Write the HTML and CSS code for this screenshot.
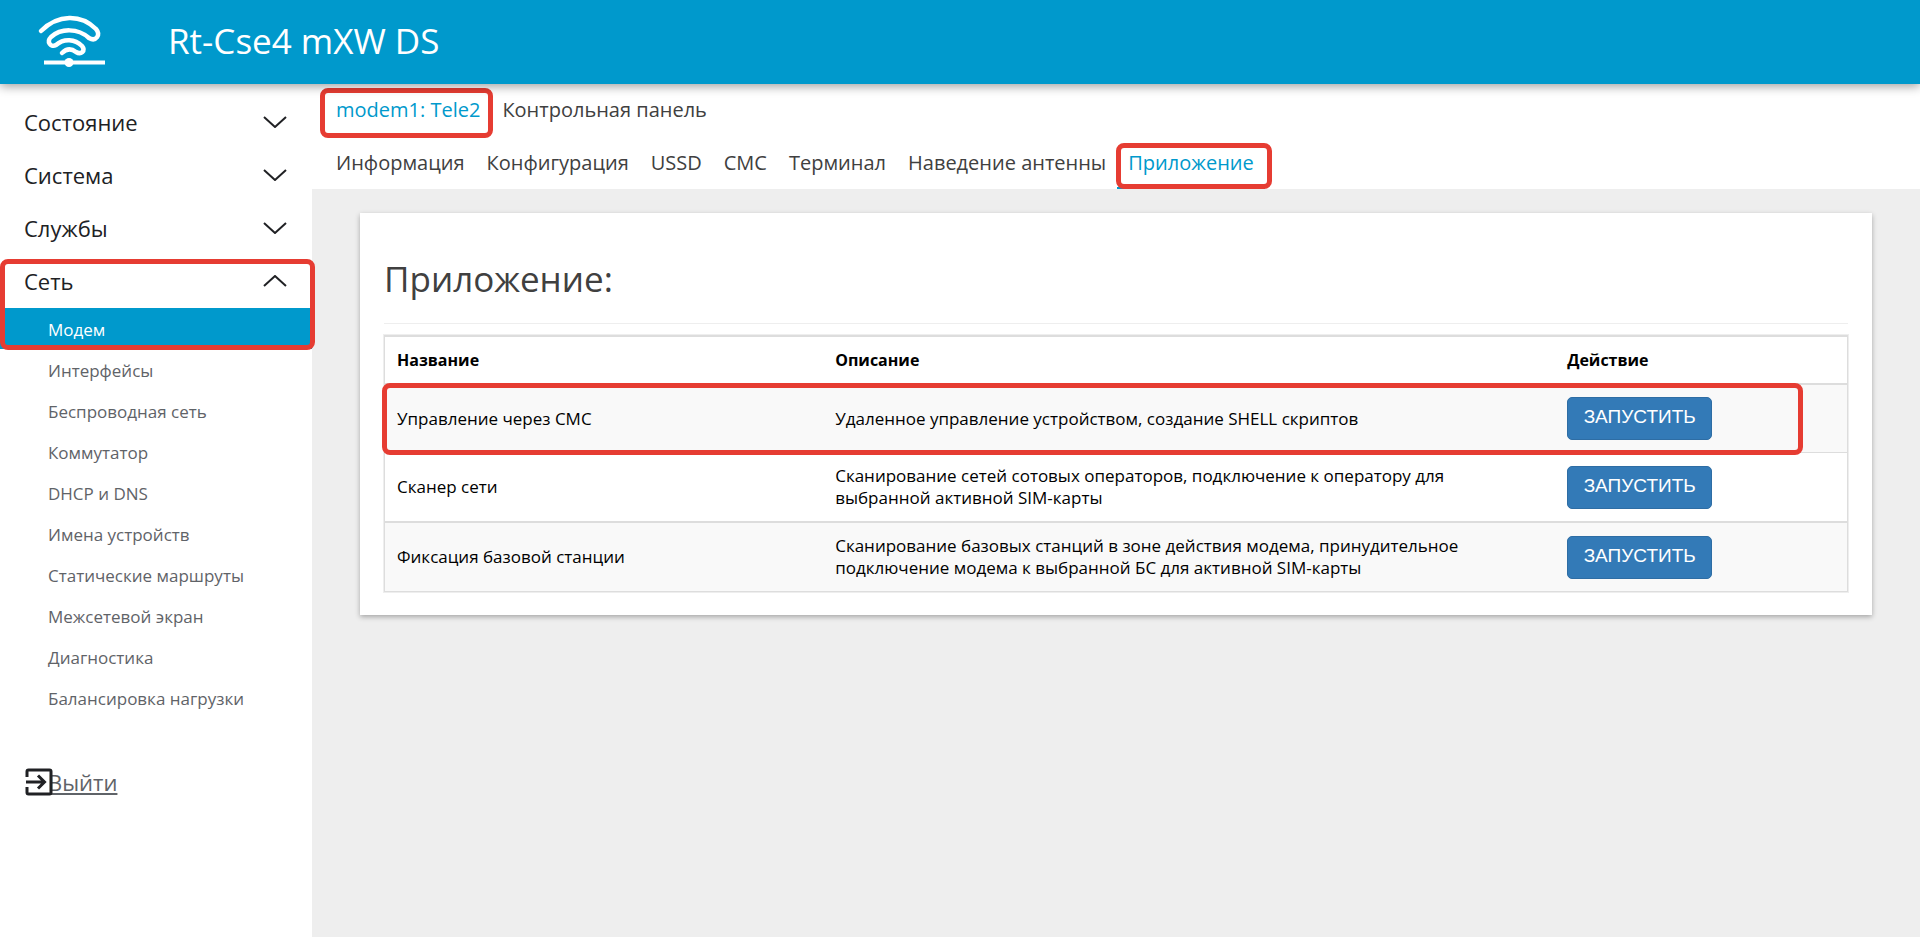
FILE: index.html
```html
<!DOCTYPE html>
<html lang="ru">
<head>
<meta charset="utf-8">
<title>Rt-Cse4 mXW DS</title>
<link rel="stylesheet" href="styles.css">
</head>
<body>
<header class="header">
  <svg class="logo" viewBox="0 0 76 62" fill="none" stroke="#fff" stroke-width="4.500" stroke-linecap="round" stroke-linejoin="round" aria-hidden="true">
    <path d="M7 21C24 4 47 4 62 19C67 25 62 32 55 28C44 18 27 18 17 27C12 32 17 38 22 35C30 28 41 29 48 36C52 41 47 45 42 42C37 38 32 39 28 43"/>
    <path d="M10 52.500H71" stroke-width="4" stroke-linecap="butt"/>
    <circle cx="35" cy="52.500" r="4.500" fill="#fff" stroke="none"/>
  </svg>
  <span class="brand">Rt-Cse4 mXW DS</span>
</header>
<div class="layout">
  <nav class="sidebar">
    <button type="button" class="section">Состояние<svg class="chevron" viewBox="0 0 24 12"><path d="M1 1L12 11L23 1"/></svg></button>
    <button type="button" class="section">Система<svg class="chevron" viewBox="0 0 24 12"><path d="M1 1L12 11L23 1"/></svg></button>
    <button type="button" class="section">Службы<svg class="chevron" viewBox="0 0 24 12"><path d="M1 1L12 11L23 1"/></svg></button>
    <div class="marked">
      <button type="button" class="section section-open">Сеть<svg class="chevron" viewBox="0 0 24 12"><path d="M1 11L12 1L23 11"/></svg></button>
      <a class="item active" href="#">Модем</a>
      <span class="mark mark-menu"></span>
    </div>
    <a class="item" href="#">Интерфейсы</a>
    <a class="item" href="#">Беспроводная сеть</a>
    <a class="item" href="#">Коммутатор</a>
    <a class="item" href="#">DHCP и DNS</a>
    <a class="item" href="#">Имена устройств</a>
    <a class="item" href="#">Статические маршруты</a>
    <a class="item" href="#">Межсетевой экран</a>
    <a class="item" href="#">Диагностика</a>
    <a class="item" href="#">Балансировка нагрузки</a>
    <a class="logout" href="#"><svg class="exit" viewBox="0 0 28 28" aria-hidden="true"><path d="M2 9V3.500Q2 2 3.500 2H24.500Q26 2 26 3.500V24.500Q26 26 24.500 26H3.500Q2 26 2 24.500V19M1 14H19M13 7.500L19.500 14L13 20.500"/></svg>Выйти</a>
  </nav>
  <main class="main">
    <div class="tabs tabs-modem">
      <a class="tab current marked" href="#">modem1: Tele2<span class="mark mark-modem"></span></a>
      <a class="tab" href="#">Контрольная панель</a>
    </div>
    <div class="tabs">
      <a class="tab" href="#">Информация</a>
      <a class="tab" href="#">Конфигурация</a>
      <a class="tab" href="#">USSD</a>
      <a class="tab" href="#">СМС</a>
      <a class="tab" href="#">Терминал</a>
      <a class="tab" href="#">Наведение антенны</a>
      <a class="tab current underlined marked" href="#">Приложение<span class="mark mark-app"></span></a>
    </div>
    <div class="content">
      <section class="card">
        <h1 class="title">Приложение:</h1>
        <div class="marked table-wrap">
        <table class="table">
          <colgroup><col class="col-name"><col class="col-text"><col class="col-action"></colgroup>
          <thead><tr><th scope="col">Название</th><th scope="col">Описание</th><th scope="col">Действие</th></tr></thead>
          <tbody>
            <tr><td>Управление через СМС</td><td><p class="text">Удаленное управление устройством, создание SHELL скриптов</p></td><td><button type="button" class="run">ЗАПУСТИТЬ</button></td></tr>
            <tr><td>Сканер сети</td><td><p class="text">Сканирование сетей сотовых операторов, подключение к оператору для<br>выбранной активной SIM-карты</p></td><td><button type="button" class="run">ЗАПУСТИТЬ</button></td></tr>
            <tr><td>Фиксация базовой станции</td><td><p class="text">Сканирование базовых станций в зоне действия модема, принудительное<br>подключение модема к выбранной БС для активной SIM-карты</p></td><td><button type="button" class="run">ЗАПУСТИТЬ</button></td></tr>
          </tbody>
        </table>
        <span class="mark mark-row"></span>
        </div>
      </section>
    </div>
  </main>
</div>
</body>
</html>
```
FILE: styles.css
```css
* { box-sizing: border-box; }
body {
  margin: 0;
  min-height: 100vh;
  display: flex;
  flex-direction: column;
  background: #eee;
  color: #404040;
  font-family: "Open Sans", "Noto Sans", sans-serif;
}
a { color: inherit; text-decoration: none; }
.header {
  position: relative;
  z-index: 1;
  display: flex;
  align-items: center;
  gap: 58px;
  height: 84px;
  padding: 0 34px 2px;
  background: #0099cc;
  color: #fff;
  box-shadow: 0 2px 10px rgba(0, 0, 0, 0.4);
}
.logo { width: 76px; height: 62px; }
.brand { font-size: 35px; line-height: 48px; }
.layout { flex: 1; display: flex; }
.sidebar { width: 312px; flex: none; padding-top: 13px; background: #fff; }
.section {
  display: flex;
  align-items: center;
  justify-content: space-between;
  width: 100%;
  height: 53px;
  padding: 0 25px 3px 24px;
  border: 0;
  background: none;
  color: #202124;
  font: 22px/32px "Open Sans", "Noto Sans", sans-serif;
}
.section-open { height: 52px; }
.chevron { width: 24px; height: 12px; fill: none; stroke: #202124; stroke-width: 2; }
.item {
  display: block;
  padding: 2px 0 0 48px;
  color: #5f6368;
  font-size: 17px;
  line-height: 39px;
}
.item.active { background: #0099cc; color: #fff; }
.logout {
  display: flex;
  align-items: center;
  margin-top: 48px;
  padding-left: 25px;
  color: #5f6368;
  font-size: 22px;
  line-height: 32px;
  text-decoration: underline;
}
.exit {
  position: relative;
  width: 28px;
  height: 28px;
  margin-right: -5px;
  fill: none;
  stroke: #202124;
  stroke-width: 3;
}
.main { flex: 1; min-width: 0; display: flex; flex-direction: column; background: #fff; }
.tabs { display: flex; padding-left: 13px; }
.tabs-modem { padding-bottom: 1px; }
.tab { padding: 0 11px; font-size: 20px; line-height: 52px; }
.current { color: #0099cc; }
.underlined { box-shadow: inset 0 -2px #0099cc; }
.marked { position: relative; }
.mark {
  position: absolute;
  border: 5px solid #e63c32;
  border-radius: 8px;
  pointer-events: none;
}
.mark-menu { inset: 3px -3px -1px 0; }
.mark-modem { inset: 4px -2px -2px -5px; }
.mark-app { inset: 6px -7px 0 -1px; }
.content { flex: 1; padding: 24px 48px; background: #eee; }
.card {
  padding: 35px 24px 22px;
  background: #fff;
  box-shadow: 0 2px 5px rgba(0, 0, 0, 0.3);
}
.title {
  margin: 0 0 10px;
  padding-bottom: 13px;
  border-bottom: 1px solid #eee;
  font-size: 35px;
  line-height: 62px;
  font-weight: 400;
}
.table-wrap { margin: 0 -1px; }
.table {
  width: 100%;
  border: 1px solid #eee;
  border-spacing: 0;
  table-layout: fixed;
  color: #000;
  font-size: 17px;
  line-height: 22px;
  text-align: left;
}
.col-name { width: 30%; }
.col-text { width: 50%; }
.table th,
.table td { padding: 0 12px; border: 0 solid #ddd; border-top-width: 2px; }
.table th { height: 48px; font-size: 16px; font-weight: 700; }
.table td { height: 69px; }
.table tr > :first-child { border-left-width: 1px; }
.table tr > :last-child { border-right-width: 1px; }
.table tbody tr:nth-child(2) td { border-top-width: 1px; }
.table tbody tr:last-child td { height: 71px; border-bottom-width: 1px; }
.table tbody tr:nth-child(odd) { background: #f9f9f9; }
.text { margin: 0; }
.run {
  display: block;
  width: 145px;
  height: 43px;
  padding: 0 0 3px;
  border: 1px solid #2e6da4;
  border-radius: 5px;
  background: #337ab7;
  color: #fff;
  font: 19px/24px "Liberation Sans", sans-serif;
}
.mark-row { inset: 49px 46px 138px -1px; }
```
